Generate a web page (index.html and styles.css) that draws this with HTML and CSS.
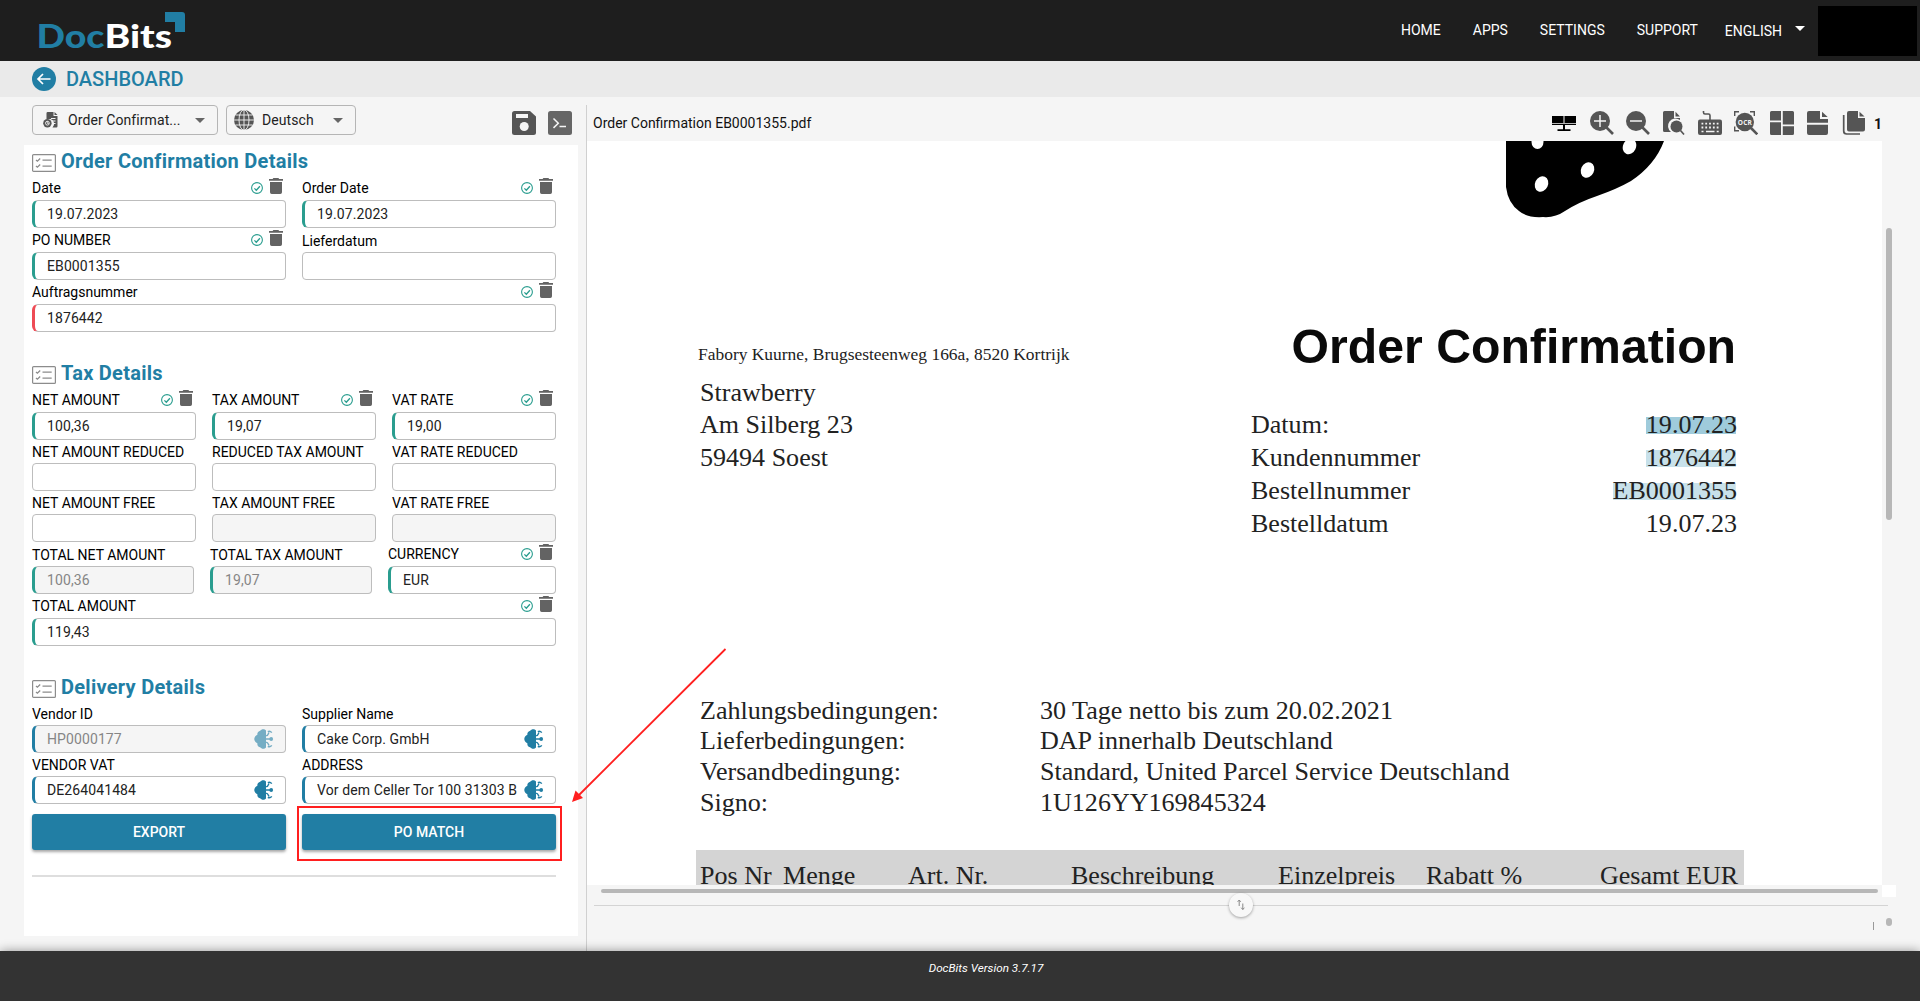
FILE: index.html
```html
<!DOCTYPE html>
<html lang="en">
<head>
<meta charset="utf-8">
<title>DocBits</title>
<link rel="stylesheet" href="styles.css">
</head>
<body>
<svg class="defs" width="0" height="0" aria-hidden="true">
  <symbol id="check" viewBox="0 0 12 12"><circle cx="6" cy="6" r="5.4" fill="none" stroke="#2a9d8f" stroke-width="1.1"/><path d="M3.4 6.4l1.9 1.8 3.6-4" fill="none" stroke="#2a9d8f" stroke-width="1.3"/></symbol>
  <symbol id="trash" viewBox="0 0 14 16"><path d="M4.4 0h5l.8.9H14v1.9H0V.9h3.6zM1 4h12v10.2Q13 16 11.300 16H2.700Q1 16 1 14.200z" fill="#636363"/></symbol>
  <symbol id="list" viewBox="0 0 24 18"><rect x=".6" y=".6" width="22.800" height="16.800" rx="1" fill="none" stroke="#8c8c8c" stroke-width="1.200"/><path d="M4 6l1.400 1.200L8.200 4.500M4 12l1.400 1.200 2.800-2.700M10.500 6.200h9.200M10.500 12.200h9.200" fill="none" stroke="#8c8c8c" stroke-width="1.300"/></symbol>
  <symbol id="brain" viewBox="0 0 20 20"><path d="M12 1.500v17C10.500 20.300 7.500 20.200 6.300 18.300 4.300 18 3 16.200 3.400 14.200 1.500 13.300.3 11.700.3 10 .3 8.300 1.500 6.700 3.400 5.800 3 3.800 4.300 2 6.300 1.700 7.500-.2 10.500-.3 12 1.500z" fill="#217ea4"/><path d="M12 10h4.500M12 6.600c2.500.6 1.600-2.300 3.300-2.900M12 13.400c2.500-.6 1.600 2.300 3.300 2.900M13.800 2.600q2.200-1.200 4 1M13.800 17.400q2.200 1.200 4-1" fill="none" stroke="#217ea4" stroke-width="1.400"/><circle cx="17.200" cy="10" r="1.900" fill="#217ea4"/></symbol>
</svg>

<header class="topbar">
  <svg class="logo" width="150" height="53" viewBox="0 0 150 53">
    <g class="logo-text">
      <text x="-1.500" y="39.500" fill="#217ea4" textLength="68" lengthAdjust="spacingAndGlyphs">Doc</text>
      <text x="66.500" y="39.500" fill="#fff" textLength="67.500" lengthAdjust="spacingAndGlyphs">Bits</text>
    </g>
    <path d="M127 4h17q3 0 3 3v17h-10V14h-10z" fill="#217ea4"/>
  </svg>
  <nav class="nav">
    <a>HOME</a><a>APPS</a><a>SETTINGS</a><a>SUPPORT</a>
    <a class="lang">ENGLISH<i class="caret caret-light"></i></a>
  </nav>
  <div class="account"></div>
</header>

<div class="crumb">
  <svg width="24" height="24" viewBox="0 0 24 24"><circle cx="12" cy="12" r="12" fill="#217ea4"/><path d="M18.500 12H6.500M11 7l-5 5 5 5" fill="none" stroke="#fff" stroke-width="1.700"/></svg>
  <span>DASHBOARD</span>
</div>

<main class="main">
  <section class="side">
    <div class="side-tools">
      <div class="select doc-type">
        <svg width="16" height="16" viewBox="0 0 16 16"><path d="M3.500 1.200Q3.500 0 4.700 0H10.500v4H14.500V14.300q0 1.200-1.200 1.200H9.500a5 5 0 0 0-2-8.500h-4z" fill="#555"/><path d="M11.500 0l3 3h-3z" fill="#555"/><circle cx="4.400" cy="11.200" r="4.200" fill="#555"/><path d="M8 6.500h4.500M9.500 9h3M10 11.500h2.500" stroke="#f5f5f5"/><circle cx="4.400" cy="11.200" r="1.900" fill="none" stroke="#f5f5f5" stroke-width=".9"/><path d="M4.400 9v2.500h1.500" stroke="#f5f5f5" stroke-width=".7" fill="none"/></svg>
        <span>Order Confirmat...</span><i class="caret"></i>
      </div>
      <div class="select language">
        <svg width="20" height="20" viewBox="0 0 20 20"><circle cx="10" cy="10" r="10" fill="#555"/><path d="M10 0v20M0 10h20M1.500 5h17M1.500 15h17" stroke="#f5f5f5" stroke-width=".9"/><ellipse cx="10" cy="10" rx="5" ry="10.200" fill="none" stroke="#f5f5f5" stroke-width=".9"/></svg>
        <span>Deutsch</span><i class="caret"></i>
      </div>
      <svg class="save" width="24" height="24" viewBox="0 0 24 24"><path d="M2.500 0H18l6 5.500v16q0 2.500-2.500 2.500h-19Q0 24 0 21.500v-19Q0 0 2.500 0z" fill="#555"/><path d="M4 3h12v4H4z" fill="#f5f5f5"/><circle cx="12.200" cy="15.500" r="4.500" fill="#f5f5f5"/></svg>
      <svg width="24" height="24" viewBox="0 0 24 24"><rect width="24" height="24" rx="2.500" fill="#666"/><path d="M5.500 7.500l4.800 4.700-4.800 4.700M11.500 15.500h6.500" fill="none" stroke="#f5f5f5" stroke-width="1.500"/></svg>
    </div>

    <div class="panel">
      <div class="group">
        <h2><svg width="24" height="18"><use href="#list"/></svg>Order Confirmation Details</h2>
        <div class="row two">
          <div class="field ok"><label>Date<svg class="c"><use href="#check"/></svg><svg class="t"><use href="#trash"/></svg></label><div class="input">19.07.2023</div></div>
          <div class="field ok"><label>Order Date<svg class="c"><use href="#check"/></svg><svg class="t"><use href="#trash"/></svg></label><div class="input">19.07.2023</div></div>
        </div>
        <div class="row two">
          <div class="field ok"><label>PO NUMBER<svg class="c"><use href="#check"/></svg><svg class="t"><use href="#trash"/></svg></label><div class="input">EB0001355</div></div>
          <div class="field plain"><label>Lieferdatum</label><div class="input"></div></div>
        </div>
        <div class="row">
          <div class="field bad"><label>Auftragsnummer<svg class="c"><use href="#check"/></svg><svg class="t"><use href="#trash"/></svg></label><div class="input">1876442</div></div>
        </div>
      </div>

      <div class="group">
        <h2><svg width="24" height="18"><use href="#list"/></svg>Tax Details</h2>
        <div class="row three">
          <div class="field ok"><label>NET AMOUNT<svg class="c"><use href="#check"/></svg><svg class="t"><use href="#trash"/></svg></label><div class="input">100,36</div></div>
          <div class="field ok"><label>TAX AMOUNT<svg class="c"><use href="#check"/></svg><svg class="t"><use href="#trash"/></svg></label><div class="input">19,07</div></div>
          <div class="field ok"><label>VAT RATE<svg class="c"><use href="#check"/></svg><svg class="t"><use href="#trash"/></svg></label><div class="input">19,00</div></div>
        </div>
        <div class="row three">
          <div class="field plain"><label>NET AMOUNT REDUCED</label><div class="input"></div></div>
          <div class="field plain"><label>REDUCED TAX AMOUNT</label><div class="input"></div></div>
          <div class="field plain"><label>VAT RATE REDUCED</label><div class="input"></div></div>
        </div>
        <div class="row three">
          <div class="field plain"><label>NET AMOUNT FREE</label><div class="input"></div></div>
          <div class="field plain off"><label>TAX AMOUNT FREE</label><div class="input"></div></div>
          <div class="field plain off"><label>VAT RATE FREE</label><div class="input"></div></div>
        </div>
        <div class="row totals">
          <div class="field plain ok off"><label>TOTAL NET AMOUNT</label><div class="input">100,36</div></div>
          <div class="field plain ok off"><label>TOTAL TAX AMOUNT</label><div class="input">19,07</div></div>
          <div class="field ok"><label>CURRENCY<svg class="c"><use href="#check"/></svg><svg class="t"><use href="#trash"/></svg></label><div class="input">EUR</div></div>
        </div>
        <div class="row">
          <div class="field ok"><label>TOTAL AMOUNT<svg class="c"><use href="#check"/></svg><svg class="t"><use href="#trash"/></svg></label><div class="input">119,43</div></div>
        </div>
      </div>

      <div class="group">
        <h2><svg width="24" height="18"><use href="#list"/></svg>Delivery Details</h2>
        <div class="row two">
          <div class="field plain ai off"><label>Vendor ID</label><div class="input"><span>HP0000177</span><svg class="b"><use href="#brain"/></svg></div></div>
          <div class="field plain ai"><label>Supplier Name</label><div class="input"><span>Cake Corp. GmbH</span><svg class="b"><use href="#brain"/></svg></div></div>
        </div>
        <div class="row two">
          <div class="field plain ai"><label>VENDOR VAT</label><div class="input"><span>DE264041484</span><svg class="b"><use href="#brain"/></svg></div></div>
          <div class="field plain ai"><label>ADDRESS</label><div class="input"><span>Vor dem Celler Tor 100 31303 B</span><svg class="b"><use href="#brain"/></svg></div></div>
        </div>
        <div class="row two actions">
          <button>EXPORT</button>
          <button class="marked">PO MATCH</button>
        </div>
        <div class="rule"></div>
      </div>
    </div>
  </section>

  <section class="viewer">
    <div class="viewer-tools">
      <span class="file">Order Confirmation EB0001355.pdf</span>
      <svg class="net" width="24" height="24" viewBox="0 0 24 24"><path d="M0 5h11.500v7H0zM12.500 5H24v7H12.500zM0 12.800h24v1.200H0zM11 14h2v4.200h5.500V20h-13v-1.800H11z" fill="#000"/></svg>
      <svg width="24" height="24" viewBox="0 0 24 24"><circle cx="10" cy="10" r="10" fill="#555"/><path d="M16 16l7 7" stroke="#555" stroke-width="2.600"/><path d="M10 4v12M4 10h12" stroke="#f5f5f5" stroke-width="1.500"/></svg>
      <svg width="24" height="24" viewBox="0 0 24 24"><circle cx="10" cy="10" r="10" fill="#555"/><path d="M16 16l7 7" stroke="#555" stroke-width="2.600"/><path d="M4 10h12" stroke="#f5f5f5" stroke-width="1.500"/></svg>
      <svg width="24" height="24" viewBox="0 0 24 24"><path d="M2.500 0H12v7h6v2a7.500 7.500 0 0 0-9 12H2.500Q1 21 1 19.500v-18Q1 0 2.500 0z" fill="#555"/><path d="M13.500.8L18 5.500h-4.500z" fill="#555"/><circle cx="14.500" cy="15.500" r="6" fill="#555"/><path d="M18.500 19.500l3.500 4" stroke="#555" stroke-width="1.600"/></svg>
      <svg width="24" height="24" viewBox="0 0 24 24"><path d="M5.500 0v1.500Q5.500 3 7 3h3.500Q12 3 12 4.500V9" fill="none" stroke="#555" stroke-width="1.600"/><rect y="8.500" width="24" height="15.500" rx="2" fill="#555"/><path d="M3.500 12.700h18M3.500 16.500h18" stroke="#f5f5f5" stroke-width="1.800" stroke-dasharray="1.800 2"/><path d="M3.500 20.500h2M8 20.500h8.500M18.700 20.500h2" stroke="#f5f5f5" stroke-width="1.600"/></svg>
      <svg width="24" height="24" viewBox="0 0 24 24"><path d="M.7 5V.7H5M16 .7h4.300V5M.7 15.500v4.300H5" fill="none" stroke="#555" stroke-width="1.400"/><circle cx="10.800" cy="11" r="9.200" fill="#555"/><path d="M17 17l6.300 6.300" stroke="#555" stroke-width="2.600"/><text x="10.800" y="13.600" class="ocr" text-anchor="middle" textLength="14">OCR</text></svg>
      <svg width="24" height="24" viewBox="0 0 24 24"><path d="M1.500 0H11v9.500H0v-8Q0 0 1.500 0zM12.800 0h9.700Q24 0 24 1.500v12H12.800zM0 11.200h11V24H1.500Q0 24 0 22.500zM12.800 15.200H24v7.300q0 1.500-1.500 1.500h-9.700z" fill="#555"/></svg>
      <svg width="24" height="24" viewBox="0 0 24 24"><path d="M3 0h11v8h8v3.800H1V2Q1 0 3 0zM1 13.800h21V22q0 2-2 2H3q-2 0-2-2z" fill="#555"/><path d="M16 .8L21.700 6H16z" fill="#555"/></svg>
      <svg width="24" height="24" viewBox="0 0 24 24"><path d="M7 0h9v7h7v11.500q0 2-2 2H7q-2 0-2-2V2Q5 0 7 0z" fill="#555"/><path d="M17.500.8L22.500 5.500h-5z" fill="#555"/><path d="M1.700 4v16q0 3 3 3H18" fill="none" stroke="#555" stroke-width="1.700"/></svg>
      <b class="count">1</b>
    </div>

    <div class="scroller">
      <div class="page">
        <svg class="berry" width="166" height="78" viewBox="0 0 166 78"><path d="M1 0V46Q3 62 14 70Q22 77 38 76Q50 77 60 70Q74 61 92 55Q112 48 126 40Q150 24 159 0z" fill="#000"/><g fill="#fff"><ellipse cx="36.500" cy="43" rx="6.500" ry="8" transform="rotate(25 36.500 43)"/><ellipse cx="82.500" cy="29" rx="6.500" ry="8" transform="rotate(25 82.500 29)"/><ellipse cx="124.500" cy="5.500" rx="6.500" ry="8" transform="rotate(25 124.500 5.500)"/><ellipse cx="32.500" cy="1" rx="6" ry="7"/></g></svg>
        <div class="letter">
          <div class="from">
            <div class="sender">Fabory Kuurne, Brugsesteenweg 166a, 8520 Kortrijk</div>
            <div class="address">Strawberry<br>Am Silberg 23<br>59494 Soest</div>
          </div>
          <div class="meta">
            <h1>Order Confirmation</h1>
            <div class="pair"><span>Datum:</span><span class="hit strong">19.07.23</span></div>
            <div class="pair"><span>Kundennummer</span><span class="hit">1876442</span></div>
            <div class="pair"><span>Bestellnummer</span><span class="hit">EB0001355</span></div>
            <div class="pair"><span>Bestelldatum</span><span>19.07.23</span></div>
          </div>
        </div>
        <div class="terms">
          <span>Zahlungsbedingungen:</span><span>30 Tage netto bis zum 20.02.2021</span>
          <span>Lieferbedingungen:</span><span>DAP innerhalb Deutschland</span>
          <span>Versandbedingung:</span><span>Standard, United Parcel Service Deutschland</span>
          <span>Signo:</span><span>1U126YY169845324</span>
        </div>
        <div class="items"><span>Pos Nr</span><span>Menge</span><span>Art. Nr.</span><span>Beschreibung</span><span>Einzelpreis</span><span>Rabatt %</span><span>Gesamt EUR</span></div>
      </div>
      <div class="vbar"><i></i></div>
    </div>
    <div class="hbar"><i></i><b></b></div>
    <div class="splitter"><div class="grip"><svg width="8" height="12" viewBox="0 0 8 12"><path d="M2.200 7V1M.6 2.800L2.200 1l1.600 1.800M5.800 4.500v6M4.200 8.700l1.600 1.800 1.600-1.800" fill="none" stroke="#888" stroke-width="1"/></svg></div></div>
    <div class="bottom"><i class="tick"></i><i class="dot"></i></div>
  </section>
</main>

<footer class="foot">DocBits Version 3.7.17</footer>

<svg class="arrow" width="160" height="160" viewBox="0 0 160 160"><path d="M154.500 2L8 148" stroke="#ff1f1f" stroke-width="1.800"/><path d="M1 155l3.500-11.500 7.500 7.500z" fill="#ff1f1f"/></svg>
</body>
</html>
```

FILE: styles.css
```css
* { box-sizing: border-box; }
body {
  margin: 0; height: 1001px; overflow: hidden; position: relative;
  display: flex; flex-direction: column;
  background: #f5f5f5; color: #111;
  font: 14px/18px Roboto, sans-serif;
}
svg { display: block; flex: none; }
.defs { position: absolute; }

.topbar { height: 61px; flex: none; display: flex; background: #1e1e1e; padding: 0 3px 0 38px; }
.logo { margin-top: 8px; overflow: visible; }
.logo-text { font: 900 32px Lato, sans-serif; }
.nav { margin-left: auto; display: flex; color: #fff; padding-top: 21px; }
.nav a { margin-right: 32px; }
.nav .lang { display: flex; margin: 1px 13px 0 -5px; }
.caret { width: 0; height: 0; border: 5px solid transparent; border-top-color: #666; border-bottom: 0; }
.caret-light { border-top-color: #fff; margin: 4px 0 0 13px; }
.account { width: 99px; height: 50px; margin-top: 6px; background: #000; }

.crumb { height: 36px; flex: none; display: flex; align-items: center; gap: 10px; padding-left: 32px; background: #eaeaea; color: #217ea4; font-size: 20px; font-weight: 500; }

.main { height: 854px; flex: none; display: flex; }
.side { width: 586px; padding: 0 8px 15px 24px; display: flex; flex-direction: column; }
.side-tools { height: 48px; display: flex; padding: 8px 6px 0 8px; }
.select { height: 30px; display: flex; align-items: center; border: 1px solid #b5b5b5; border-radius: 4px; color: #222; letter-spacing: .08px; }
.select .caret { margin-left: auto; }
.doc-type { width: 186px; padding: 0 12px 0 10px; gap: 9px; margin-right: 8px; }
.language { width: 130px; padding: 0 12px 0 7px; gap: 8px; }
.save { margin: 0 12px 0 156px; }
.side-tools > svg { align-self: flex-start; margin-top: 6px; }

.panel { flex: 1; background: #fff; padding: 3px 22px 0 8px; display: flex; flex-direction: column; gap: 28px; }
h2 { display: flex; gap: 5px; margin: 0 0 2px; height: 26px; font-size: 20px; line-height: 26px; font-weight: 700; letter-spacing: .27px; color: #217ea4; }
h2 svg { margin-top: 6px; }
.row { display: grid; column-gap: 16px; align-items: end; }
.two { grid-template-columns: 1fr 1fr; }
.three { grid-template-columns: 1fr 1fr 1fr; }
.totals { grid-template-columns: 162px 162px 168px; }
.field { min-width: 0; }
label { height: 24px; display: flex; align-items: flex-start; padding: 3px 3px 0 0; color: #000; white-space: nowrap; }
.plain label { height: 23px; }
.c { width: 12px; height: 12px; margin: 3px 6px 0 auto; }
.t { width: 14px; height: 16px; margin-top: -1px; }
.input { height: 28px; display: flex; align-items: center; padding: 0 14px 0 15px; border: 1px solid #bdbdbd; border-radius: 4px; background: #fff; color: #222; line-height: 26px; letter-spacing: .1px; white-space: nowrap; }
.ok .input, .bad .input, .ai .input { border-left-width: 3px; border-radius: 6px 4px 4px 6px; padding-left: 12px; }
.ok .input { border-left-color: #2a9d8f; }
.bad .input { border-left-color: #ee4b55; }
.ai .input { border-left-color: #217ea4; }
.off .input { background: #f5f5f5; color: #868686; }
.input span { flex: 1; }
.b { width: 20px; height: 20px; margin-right: -3px; }
.off .b { opacity: .6; }
.actions { margin-top: 10px; }
button { height: 36px; border: 0; border-radius: 3px; background: #217ea4; color: #fff; font: 500 14px Roboto, sans-serif; box-shadow: 0 2px 3px rgba(0,0,0,.35); }
.marked { position: relative; }
.marked::after { content: ""; position: absolute; inset: -8px -6px -11px -5px; border: 2px solid #ff1f1f; }
.rule { margin-top: 25px; height: 2px; background: #dedede; }

.viewer { width: 1334px; margin-top: 8px; border-left: 1px solid #d0d0d0; }
.viewer-tools { height: 36px; display: flex; align-items: flex-start; gap: 12px; padding: 6px 39px 0 6px; color: #111; }
.file { margin: 3px auto 0 0; }
.net { margin-right: 2px; }
.count { margin: 4px 0 0 -4px; width: 7px; }
.scroller { height: 744px; display: flex; }
.page { width: 1295px; overflow: hidden; background: #fff; color: #222; font: 26.05px/32.3px "Liberation Serif", serif; white-space: nowrap; }
.berry { margin-left: 918px; }
.letter { display: flex; justify-content: space-between; height: 222px; margin: 99px 145px 0 111px; }
.sender { margin: 26px 0 13px; font-size: 17.45px; line-height: 20px; }
.address { padding-left: 2px; }
.meta { width: 486px; }
h1 { margin: 0 1px 35.2px 0; text-align: right; font: 700 48.2px/56px "Liberation Sans", sans-serif; color: #0a0a0a; }
.pair { display: flex; justify-content: space-between; line-height: 32.8px; }
.hit { background: linear-gradient(#c8e1ea, #c8e1ea) 0 8px / 99% 17px no-repeat; }
.strong { background-image: linear-gradient(#9fcbdb, #9fcbdb); }
.terms { display: grid; grid-template-columns: 340px 1fr; margin: 155.5px 0 31px 113px; line-height: 30.8px; }
.items { display: grid; grid-template-columns: 83px 125px 163px 207px 148px 174px 1fr; width: 1048px; height: 50px; margin-left: 109px; padding: 11.5px 0 0 4px; background: #d4d4d4; line-height: 30px; }
.vbar { padding: 87px 0 0 4px; }
.vbar i { display: block; width: 6px; height: 292px; border-radius: 3px; background: #b7b7b7; }
.hbar { height: 12px; display: flex; padding-left: 14px; }
.hbar i { width: 1277px; height: 4px; margin: 4px 4px 0 0; border-radius: 2px; background: #b7b7b7; }
.hbar b { width: 14px; background: #fff; }
.splitter { height: 16px; margin: 0 32px 0 7px; display: flex; justify-content: center; align-items: center; background: linear-gradient(#d4d4d4, #d4d4d4) 0 8px / 100% 1px no-repeat; }
.grip { width: 24px; height: 24px; flex: none; display: flex; align-items: center; justify-content: center; border-radius: 50%; background: #f8f8f8; box-shadow: 0 1px 3px rgba(0,0,0,.35); }
.bottom { display: flex; padding: 5px 28px 0 0; justify-content: flex-end; gap: 12px; }
.tick { width: 1px; height: 8px; margin-top: 4px; background: #999; }
.dot { width: 6px; height: 8px; border-radius: 3px; background: #b7b7b7; }
.ocr { font: 700 6.500px "Open Sans", sans-serif; fill: #f5f5f5; }

.foot { height: 50px; flex: none; position: relative; padding: 8px 0 0 52px; text-align: center; background: #333; color: #fff; font-size: 11.7px; font-style: italic; box-shadow: 0 0 10px rgba(0,0,0,.4); }
.arrow { position: absolute; left: 571px; top: 647px; }
```
